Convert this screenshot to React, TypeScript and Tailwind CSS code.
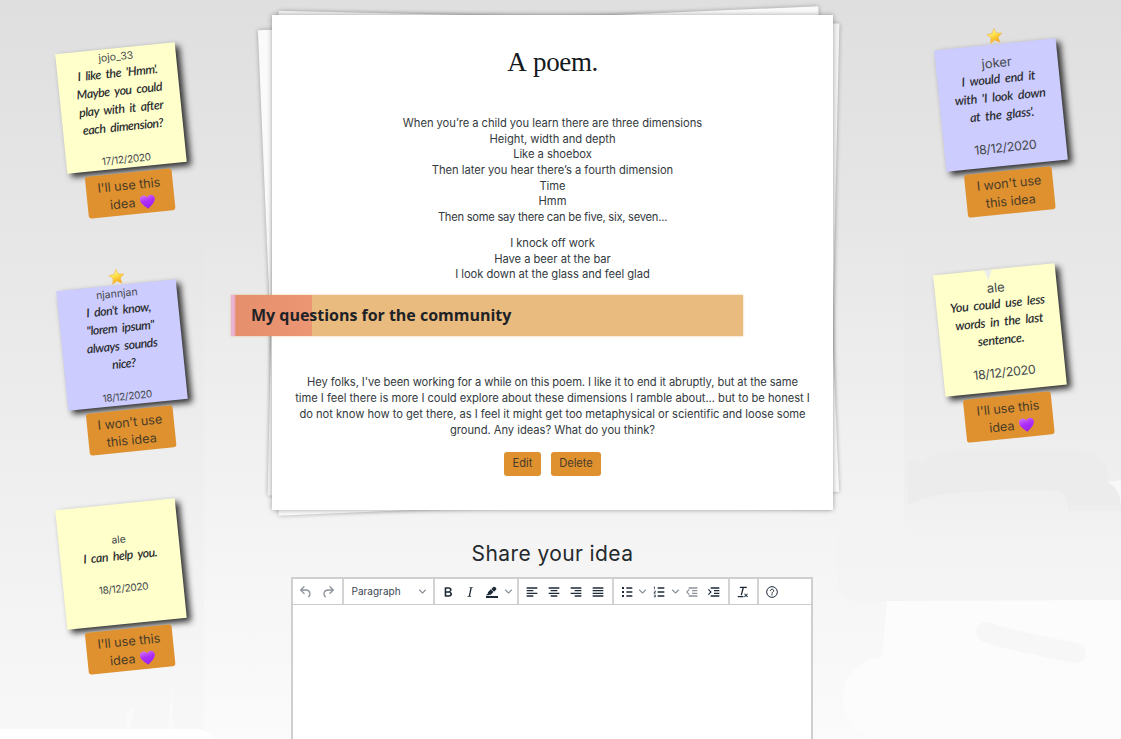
import React from "react";

type NoteProps = {
  author: string;
  lines: string[];
  date: string;
  action: "use" | "wont";
  tone: "yellow" | "purple";
  size: "sm" | "lg";
  notch?: boolean;
  className?: string;
};

function Star() {
  return (
    <svg viewBox="0 0 24 24" className="absolute -top-[17.500px] left-[52.500px] h-[17px] w-[17px]">
      <defs>
        <linearGradient id="starFill" x1="0" y1="0" x2="0.4" y2="1">
          <stop offset="0" stopColor="#fffbd0" />
          <stop offset="0.5" stopColor="#fde64f" />
          <stop offset="1" stopColor="#f7a81b" />
        </linearGradient>
      </defs>
      <path
        d="M12 1.500l3.100 7 7.600.8-5.700 5.100 1.600 7.500L12 18.100l-6.600 3.800L7 14.400 1.300 9.300l7.600-.8z"
        fill="url(#starFill)"
        stroke="#f0b24e"
        strokeWidth="0.8"
        strokeLinejoin="round"
      />
    </svg>
  );
}

function Heart() {
  return (
    <svg viewBox="0 0 24 24" className="h-[16px] w-[16px]">
      <defs>
        <linearGradient id="heartFill" x1="0" y1="0" x2="0.3" y2="1">
          <stop offset="0" stopColor="#d07bff" />
          <stop offset="0.5" stopColor="#b02ffb" />
          <stop offset="1" stopColor="#9a22ea" />
        </linearGradient>
      </defs>
      <path
        d="M12 22.500C7 18.500.8 13.500.8 7.900.8 4.300 3.300 2 6.300 2 8.900 2 11 3.500 12 5.800 13 3.500 15.100 2 17.700 2c3 0 5.500 2.300 5.500 5.900 0 5.600-6.200 10.600-11.200 14.600z"
        fill="url(#heartFill)"
      />
    </svg>
  );
}

function Note({ author, lines, date, action, tone, size, notch, className = "" }: NoteProps) {
  const lg = size === "lg";
  return (
    <div
      className={`relative flex flex-col items-center -rotate-[5.800deg] ${
        lg ? "w-[122px] origin-[61px_61px]" : "w-[120px] origin-[60px_60px]"
      } ${className}`}
    >
      {tone === "purple" && <Star />}
      <div
        className={`flex w-full shrink-0 flex-col items-center justify-center whitespace-nowrap text-[#45494c] shadow-[4px_4px_6px_rgba(0,0,0,0.8)] ${
          lg ? "h-[122px]" : "h-[120px]"
        } ${tone === "purple" ? "bg-[#ccccff]" : "bg-[#ffffcc]"}`}
      >
        <p className={lg ? "text-[13px] leading-[18px]" : "text-[10.500px] leading-4"}>{author}</p>
        <div
          className={`mb-3.5 text-center font-[Lato,sans-serif] leading-[18px] font-semibold text-[#2c2e30] italic [word-spacing:2.500px] ${
            lg ? "text-[12.500px] tracking-[-0.300px]" : "text-[12.300px] tracking-[-0.450px]"
          }`}
        >
          {lines.map((l) => (
            <p key={l} className="relative -top-px">
              {l}
            </p>
          ))}
        </div>
        <p className={lg ? "text-[12.500px] leading-[18px] tracking-[-0.300px]" : "text-[10px] leading-4 tracking-[-0.300px]"}>{date}</p>
      </div>
      {notch && (
        <svg viewBox="0 0 10 14" className="absolute -top-px left-[50px] h-[13px] w-[8px] rotate-[6deg]">
          <path d="M0 0h10L6 14C5 8 3 4 0 0z" fill="#ebebeb" />
        </svg>
      )}
      <button
        className={`mt-[5px] flex shrink-0 flex-col items-center justify-center rounded-[3px] bg-[#df912f] pt-px text-[12.700px] leading-[18px] tracking-[-0.050px] whitespace-nowrap text-[#4a3c28] ${
          lg ? "h-[43px] w-[88px]" : "h-[42px] w-[87px]"
        }`}
      >
        {action === "use" ? (
          <>
            <span>I'll use this</span>
            <span className="flex items-center gap-[4px] pl-[4px]">
              idea <Heart />
            </span>
          </>
        ) : (
          <>
            <span>I won't use</span>
            <span>this idea</span>
          </>
        )}
      </button>
    </div>
  );
}

function Icon({ d, muted = false, className = "" }: { d: string; muted?: boolean; className?: string }) {
  return (
    <span className="flex w-[22.200px] shrink-0 justify-center">
      <svg
        viewBox="0 0 24 24"
        className={`h-4 w-4 ${muted ? "fill-[#8c939b]" : "fill-[#1c2937]"} ${className}`}
      >
        <path fillRule="evenodd" d={d} />
      </svg>
    </span>
  );
}

function Chevron() {
  return (
    <svg viewBox="0 0 10 10" className="h-[7px] w-[7px] shrink-0 fill-[#848c95]">
      <path d="M8.700 2.200c.3-.3.8-.3 1 0 .4.4.4.9 0 1.200L5.700 7.800c-.3.3-.9.3-1.200 0L.2 3.400a.8.8 0 0 1 0-1.200c.3-.3.8-.3 1.100 0L5 6l3.700-3.800z" />
    </svg>
  );
}

const undo =
  "M6.400 8H12c3.700 0 6.200 2 6.800 5.100.6 2.700-.4 5.600-2.300 6.800a1 1 0 0 1-1-1.800c1.100-.6 1.800-2.700 1.400-4.600-.5-2.100-2.100-3.500-4.900-3.500H6.400l3.300 3.300a1 1 0 1 1-1.400 1.400l-5-5a1 1 0 0 1 0-1.400l5-5a1 1 0 0 1 1.400 1.400L6.400 8z";
const bold =
  "M7.800 19c-.3 0-.5 0-.6-.2l-.2-.5V5.700c0-.2 0-.4.2-.5l.6-.2h5c1.500 0 2.700.3 3.500 1 .7.6 1.100 1.400 1.100 2.500a3 3 0 0 1-.6 1.900c-.4.6-1 1-1.600 1.200.4.1.9.3 1.300.6s.8.7 1 1.200c.4.4.5 1 .5 1.600 0 1.300-.4 2.300-1.300 3-.8.7-2.100 1-3.800 1H7.800zm5-8.300c.6 0 1.200-.1 1.600-.5.4-.3.6-.7.6-1.300 0-1.100-.8-1.700-2.300-1.700H9.300v3.500h3.400zm.5 6c.7 0 1.300-.1 1.700-.4.4-.4.6-.9.6-1.500s-.2-1-.7-1.400c-.4-.3-1-.4-2-.4H9.400v3.800h4z";
const italic =
  "M16.700 4.700l-.1.9h-.3c-.6 0-1 0-1.400.3-.3.3-.4.6-.5 1.100l-2.100 9.800v.6c0 .5.4.8 1.400.8h.2l-.2.8H8l.2-.8h.2c1.100 0 1.800-.5 2-1.500l2-9.800.1-.5c0-.6-.4-.8-1.400-.8h-.3l.2-.9h5.700z";
const highlight =
  "M3 18h18v3H3zM7.700 16.700H3l3.300-3.300-.7-.8L10.200 8l4 4.100-4 4.200c-.2.2-.6.2-.8 0l-.6-.7-1.100 1.100zm5-7.500L11 7.400l3-2.900a2 2 0 0 1 2.600 0L18 6c.7.7.7 2 0 2.700l-2.900 2.900-1.800-1.800-.6-.6z";
const alignLeft = "M4 5h16v2H4zM4 9h10v2H4zM4 13h16v2H4zM4 17h10v2H4z";
const alignCenter = "M4 5h16v2H4zM7 9h10v2H7zM4 13h16v2H4zM7 17h10v2H7z";
const alignRight = "M4 5h16v2H4zM10 9h10v2H10zM4 13h16v2H4zM10 17h10v2H10z";
const alignFull = "M4 5h16v2H4zM4 9h16v2H4zM4 13h16v2H4zM4 17h16v2H4z";
const bullets =
  "M11 5h9v2h-9zM11 11h9v2h-9zM11 17h9v2h-9zM4.500 4.500h3v3h-3zM4.500 10.500h3v3h-3zM4.500 16.500h3v3h-3z";
const numbers =
  "M10 5h10v2H10zM10 11h10v2H10zM10 17h10v2H10zM6 4v4H5V5H4V4zM4 10h3v2L5.500 13.200H7v1H4v-1.200l2-1.500V11H4zM4 16h3v4H4v-1h2v-.6H4.500v-.9H6V17H4z";
const outdent = "M7 5h13v2H7zM12 9h8v2h-8zM12 13h8v2h-8zM7 17h13v2H7zM8.600 8.800 5.400 12l3.200 3.200-1.200 1.200L3 12l4.400-4.400z";
const indent = "M7 5h13v2H7zM12 9h8v2h-8zM12 13h8v2h-8zM7 17h13v2H7zM4.200 7.600 8.600 12l-4.400 4.400L3 15.200 6.200 12 3 8.800z";
const clearFormat =
  "M13.200 6a1 1 0 0 1 0 .2l-2.600 10a1 1 0 0 1-1 .8h-.2a.8.8 0 0 1-.8-1l2.600-10H8a1 1 0 1 1 0-2h9a1 1 0 0 1 0 2h-3.800zM5 18h7a1 1 0 0 1 0 2H5a1 1 0 0 1 0-2zm13 1.500L16.500 18 15 19.500a.7.7 0 0 1-1-1l1.500-1.500-1.500-1.500a.7.7 0 0 1 1-1l1.500 1.500 1.500-1.500a.7.7 0 0 1 1 1L17.500 17l1.500 1.500a.7.7 0 0 1-1 1z";

function Toolbar() {
  const group = "flex h-full shrink-0 items-center border-r-2 border-[#d3d3d3]";
  return (
    <div className="flex h-[26px] items-center border-b border-[#cccccc] bg-white">
      <div className={`${group} w-[51px] pl-[1.500px]`}>
        <Icon d={undo} muted />
        <Icon d={undo} muted className="-scale-x-100" />
      </div>
      <div className={`${group} w-[91px] justify-between pr-[7px] pl-[7.500px]`}>
        <span className="text-[10px] tracking-[-0.200px] text-[#3a4653]">
          <span className="tracking-[0.020px]">Paragraph</span>
        </span>
        <Chevron />
      </div>
      <div className={`${group} w-[83.500px] pl-[2px]`}>
        <Icon d={bold} />
        <Icon d={italic} />
        <Icon d={highlight} />
        <span className="ml-[1.500px]">
          <Chevron />
        </span>
      </div>
      <div className={`${group} w-[95.500px] pl-[2px]`}>
        <Icon d={alignLeft} />
        <Icon d={alignCenter} />
        <Icon d={alignRight} />
        <Icon d={alignFull} />
      </div>
      <div className={`${group} w-[116px] pl-[1.500px]`}>
        <Icon d={bullets} />
        <span className="mx-[1.800px]">
          <Chevron />
        </span>
        <Icon d={numbers} />
        <span className="mx-[1.800px]">
          <Chevron />
        </span>
        <Icon d={outdent} muted />
        <Icon d={indent} />
      </div>
      <div className={`${group} w-[28.500px] justify-center`}>
        <Icon d={clearFormat} />
      </div>
      <div className="flex w-[26px] justify-center">
        <svg viewBox="0 0 24 24" className="h-4 w-4 fill-none stroke-[#1c2937]" strokeWidth="1.500">
          <circle cx="12" cy="12" r="8" />
          <path d="M9.500 10a2.500 2.300 0 1 1 3.800 2c-.9.600-1.300 1-1.300 1.900" strokeLinecap="round" />
          <circle cx="12" cy="16.300" r="0.400" />
        </svg>
      </div>
    </div>
  );
}

function Backdrop() {
  return (
    <svg viewBox="0 0 1121 739" className="absolute inset-0 h-full w-full">
      <defs>
        <linearGradient id="pale" x1="0" y1="0" x2="0" y2="1">
          <stop offset="0.300" stopColor="#fff" stopOpacity="0" />
          <stop offset="1" stopColor="#fff" stopOpacity="0.400" />
        </linearGradient>
        <linearGradient id="band" x1="0" y1="0" x2="0" y2="1">
          <stop offset="0" stopColor="#f3f3f3" stopOpacity="0" />
          <stop offset="0.400" stopColor="#f3f3f3" />
          <stop offset="1" stopColor="#f4f4f4" />
        </linearGradient>
      </defs>
      <path d="M204 0h700v739H204z" fill="url(#pale)" />
      <path d="M908 460c8-2 12 2 15 5 6-10 16-15 30-15h125c22 0 32 14 30 32 10 6 13 14 13 28v13H908z" fill="#ececec" />
      <path d="M1108 482l13-2v30c0-14-3-22-13-28z" fill="#f8f8f8" />
      <path d="M908 505c20-12 60-14 110-14h32c14 0 18 6 18 16v4h53v22H908z" fill="#f0f0f0" />
      <path d="M837 500h284v101H855c-12 0-18-10-18-24z" fill="url(#band)" />
      <path d="M887 601l234-1v139H880c-25-5-37-20-37-40 0-22 16-39 39-42z" fill="#fcfcfc" />
      <path d="M986 632c22 8 55 14 90 21" fill="none" stroke="#f7f7f7" strokeWidth="20" strokeLinecap="round" />
      <path d="M0 729h195c10 0 15 4 20 10H0z" fill="#fff" />
      <path d="M126 729l1-16 8-7-5 23zM168 729l4-45 1 45z" fill="#fafafa" />
    </svg>
  );
}

export default function App() {
  return (
    <div className="relative flex h-[739px] w-full overflow-hidden bg-linear-to-b from-[#dfdfdf] via-[#ebebeb] to-[#f8f8f8] font-[Inter,sans-serif] text-[#333a40]">
      <Backdrop />
      <aside className="relative flex w-[272px] shrink-0 flex-col pt-[47.500px] pl-[60.500px]">
        <Note author="jojo_33" lines={["I like the 'Hmm'.", "Maybe you could", "play with it after", "each dimension?"]} date="17/12/2020" action="use" tone="yellow" size="sm" />
        <Note author="njannjan" lines={["I don't know,", '"lorem ipsum"', "always sounds", "nice?"]} date="18/12/2020" action="wont" tone="purple" size="sm" className="mt-[70px] ml-[1px]" />
        <Note author="ale" lines={["I can help you."]} date="18/12/2020" action="use" tone="yellow" size="sm" className="mt-[52.500px]" />
      </aside>

      <main className="relative flex w-[561px] shrink-0 flex-col pt-[15px]">
        <section className="relative h-[495px] shrink-0">
          <div className="absolute top-[2.500px] -left-[4px] h-[486px] w-[561px] -rotate-[2.450deg] bg-[#fafafa] shadow-[0_0_4px_rgba(0,0,0,0.3)]" />
          <div className="absolute top-[2px] left-[0.500px] h-[485px] w-[561px] rotate-[1.300deg] bg-[#f4f4f4] shadow-[0_0_4px_rgba(0,0,0,0.3)]" />
          <div className="relative flex h-full flex-col items-center bg-white text-center text-[11.200px] leading-[15.700px] tracking-[-0.035px] shadow-[0_0_5px_rgba(0,0,0,0.35)]">
            <h1 className="mt-[27px] mb-[33.800px] font-['Liberation_Serif',serif] text-[27px] leading-[40px] tracking-[-0.400px] text-[#15191d] [word-spacing:2px]">
              A poem.
            </h1>
            <div className="whitespace-nowrap">
              <p>When you’re a child you learn there are three dimensions</p>
              <p>Height, width and depth</p>
              <p>Like a shoebox</p>
              <p>Then later you hear there’s a fourth dimension</p>
              <p>Time</p>
              <p>Hmm</p>
              <p className="tracking-[-0.260px]">Then some say there can be five, six, seven...</p>
            </div>
            <div className="mt-[10.300px] whitespace-nowrap">
              <p>I knock off work</p>
              <p>Have a beer at the bar</p>
              <p>I look down at the glass and feel glad</p>
            </div>
            <h2 className="mt-[12px] -ml-[41px] flex h-[40.500px] w-[512px] shrink-0 items-center self-start bg-[#eabb7e] bg-linear-to-r from-[#e9b3d4] from-[3px] via-[#e58f6c] via-[5px] to-[#ec9673] to-[80px] bg-[length:81px_100%] bg-no-repeat pl-[20px] font-['Open_Sans','Noto_Sans',sans-serif] text-[16px] font-bold tracking-[-0.020px] text-[#1d2227] shadow-[0_0_2px_rgba(223,145,47,0.5)]">
              My questions for the community
            </h2>
            <div className="mt-[39.800px] whitespace-nowrap">
              <p className="tracking-[-0.090px]">Hey folks, I've been working for a while on this poem. I like it to end it abruptly, but at the same</p>
              <p>time I feel there is more I could explore about these dimensions I ramble about... but to be honest I</p>
              <p>do not know how to get there, as I feel it might get too metaphysical or scientific and loose some</p>
              <p>ground. Any ideas? What do you think?</p>
            </div>
            <div className="mt-[13.500px] flex gap-[10.500px] text-[#4a3c28]">
              <button className="h-[24px] w-[36.500px] rounded-[3px] bg-[#df912f] pt-px">Edit</button>
              <button className="h-[24px] w-[49.500px] rounded-[3px] bg-[#df912f] pt-px">Delete</button>
            </div>
          </div>
        </section>
        <h2 className="mt-[29px] text-center text-[21px] leading-[30px] tracking-[0.400px] text-[#24292e]">Share your idea</h2>
        <div className="mr-[20px] ml-[19px] mt-[8px] h-[200px] shrink-0 border-2 border-[#cfcfcf] bg-white">
          <Toolbar />
        </div>
      </main>

      <aside className="relative flex flex-1 flex-col pt-[44.300px] pl-[107px]">
        <Note author="joker" lines={["I would end it", "with 'I look down", "at the glass'."]} date="18/12/2020" action="wont" tone="purple" size="lg" />
        <Note author="ale" lines={["You could use less", "words in the last", "sentence."]} date="18/12/2020" action="use" tone="yellow" size="lg" notch className="mt-[54.700px] -ml-[1px]" />
      </aside>
    </div>
  );
}
